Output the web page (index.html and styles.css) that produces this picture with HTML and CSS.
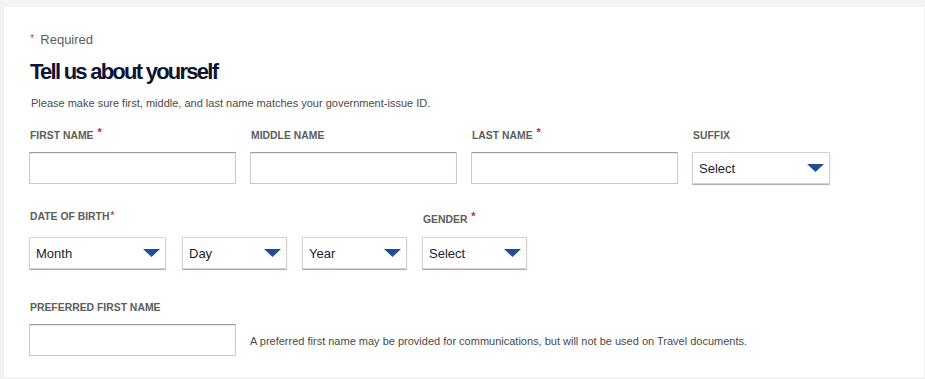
FILE: index.html
```html
<!DOCTYPE html>
<html lang="en">
<head>
<meta charset="utf-8">
<title>Tell us about yourself</title>
<link rel="stylesheet" href="styles.css">
</head>
<body>
<main class="card">
  <p class="required"><span class="req-star">*</span>Required</p>
  <h1 class="title">Tell us about yourself</h1>
  <p class="subtitle">Please make sure first, middle, and last name matches your government-issue ID.</p>

  <div class="row row-names">
    <div class="field">
      <label class="label">FIRST NAME <span class="star">*</span></label>
      <div class="input"></div>
    </div>
    <div class="field">
      <label class="label">MIDDLE NAME</label>
      <div class="input"></div>
    </div>
    <div class="field">
      <label class="label">LAST NAME <span class="star">*</span></label>
      <div class="input"></div>
    </div>
    <div class="field">
      <label class="label">SUFFIX</label>
      <div class="select w-suffix"><span>Select</span><svg class="arrow" viewBox="0 0 17 8"><path d="M0 0H17L8.5 8Z"/></svg></div>
    </div>
  </div>

  <div class="row row-dob">
    <div class="field">
      <label class="label label-dob">DATE OF BIRTH<span class="star star-tight">*</span></label>
      <div class="dob">
        <div class="select w-month"><span>Month</span><svg class="arrow" viewBox="0 0 17 8"><path d="M0 0H17L8.5 8Z"/></svg></div>
        <div class="select w-small"><span>Day</span><svg class="arrow" viewBox="0 0 17 8"><path d="M0 0H17L8.5 8Z"/></svg></div>
        <div class="select w-small"><span>Year</span><svg class="arrow" viewBox="0 0 17 8"><path d="M0 0H17L8.5 8Z"/></svg></div>
      </div>
    </div>
    <div class="field">
      <label class="label label-gender">GENDER <span class="star">*</span></label>
      <div class="select w-small"><span>Select</span><svg class="arrow" viewBox="0 0 17 8"><path d="M0 0H17L8.5 8Z"/></svg></div>
    </div>
  </div>

  <div class="row-pref">
    <label class="label">PREFERRED FIRST NAME</label>
    <div class="pref-line">
      <div class="input"></div>
      <p class="hint">A preferred first name may be provided for communications, but will not be used on Travel documents.</p>
    </div>
  </div>
</main>
</body>
</html>
```

FILE: styles.css
```css
* { box-sizing: border-box; }

html, body {
  margin: 0;
  padding: 0;
}

body {
  background: #f3f3f3;
  font-family: "Liberation Sans", Arial, sans-serif;
  padding: 7px 1px 2px 4px;
  width: 925px;
  height: 379px;
  overflow: hidden;
}

.card {
  background: #ffffff;
  width: 920px;
  height: 370px;
  padding: 25px 0 0 25px;
  display: flex;
  flex-direction: column;
}

.required {
  margin: 0;
  font-size: 13px;
  line-height: 16px;
  color: #5c5c5c;
  padding-left: 1px;
}

.req-star {
  color: #d0455c;
  font-size: 11px;
  line-height: 0;
  margin-right: 6px;
  position: relative;
  top: -2px;
}

.title {
  margin: 11px 0 0 1px;
  font-size: 22px;
  line-height: 26px;
  font-weight: 700;
  letter-spacing: -1.75px;
  color: #0d1532;
}

.subtitle {
  margin: 11px 0 0 2px;
  font-size: 11px;
  line-height: 14px;
  color: #4a4a4a;
}

.row {
  display: flex;
}

.row-names {
  margin-top: 20px;
  gap: 14px;
}

.field {
  display: flex;
  flex-direction: column;
}

.label {
  display: block;
  font-size: 10.4px;
  line-height: 12px;
  font-weight: 700;
  color: #5d5d5d;
  margin: 0 0 10px 1px;
  white-space: nowrap;
}

.star {
  color: #d0213a;
  font-size: 11px;
  line-height: 0;
  position: relative;
  top: -3px;
  margin-left: 1px;
}

.star-tight {
  color: #d0543a;
  font-size: 10px;
  top: -1px;
  margin-left: 1px;
}

.input {
  width: 207px;
  height: 32px;
  background: #fff;
  border: 1px solid #c9c9c9;
  border-top-color: #9a9a9a;
  box-shadow: inset 0 1px 1px #ececec;
  border-radius: 1px;
}

.select {
  height: 32px;
  background: #fff;
  border: 1px solid #d2d2d2;
  border-radius: 1px;
  box-shadow: 0 1px 1px rgba(0, 0, 0, 0.35);
  display: flex;
  align-items: center;
  justify-content: space-between;
  padding: 0 5px 0 6px;
  font-size: 13px;
  color: #1a1d33;
}

.select span {
  line-height: 16px;
  padding-top: 1px;
}

.arrow {
  width: 17px;
  height: 8px;
  fill: #1e4f94;
  flex: none;
}

.w-suffix { width: 138px; }
.w-month { width: 137px; }
.w-small { width: 105px; }

.row-dob {
  margin-top: 27px;
  gap: 15px;
}

.dob {
  display: flex;
  gap: 15px;
}

.dob .w-month { margin-right: 1px; }

.label-dob {
  margin-bottom: 14px;
}

.label-gender {
  margin-top: 3px;
  margin-bottom: 11px;
}

.row-pref {
  margin-top: 33px;
  display: flex;
  flex-direction: column;
}

.pref-line {
  display: flex;
  align-items: center;
  gap: 14px;
}

.hint {
  margin: 0;
  font-size: 11px;
  line-height: 14px;
  color: #4a4a4a;
  padding-top: 1px;
}
```
